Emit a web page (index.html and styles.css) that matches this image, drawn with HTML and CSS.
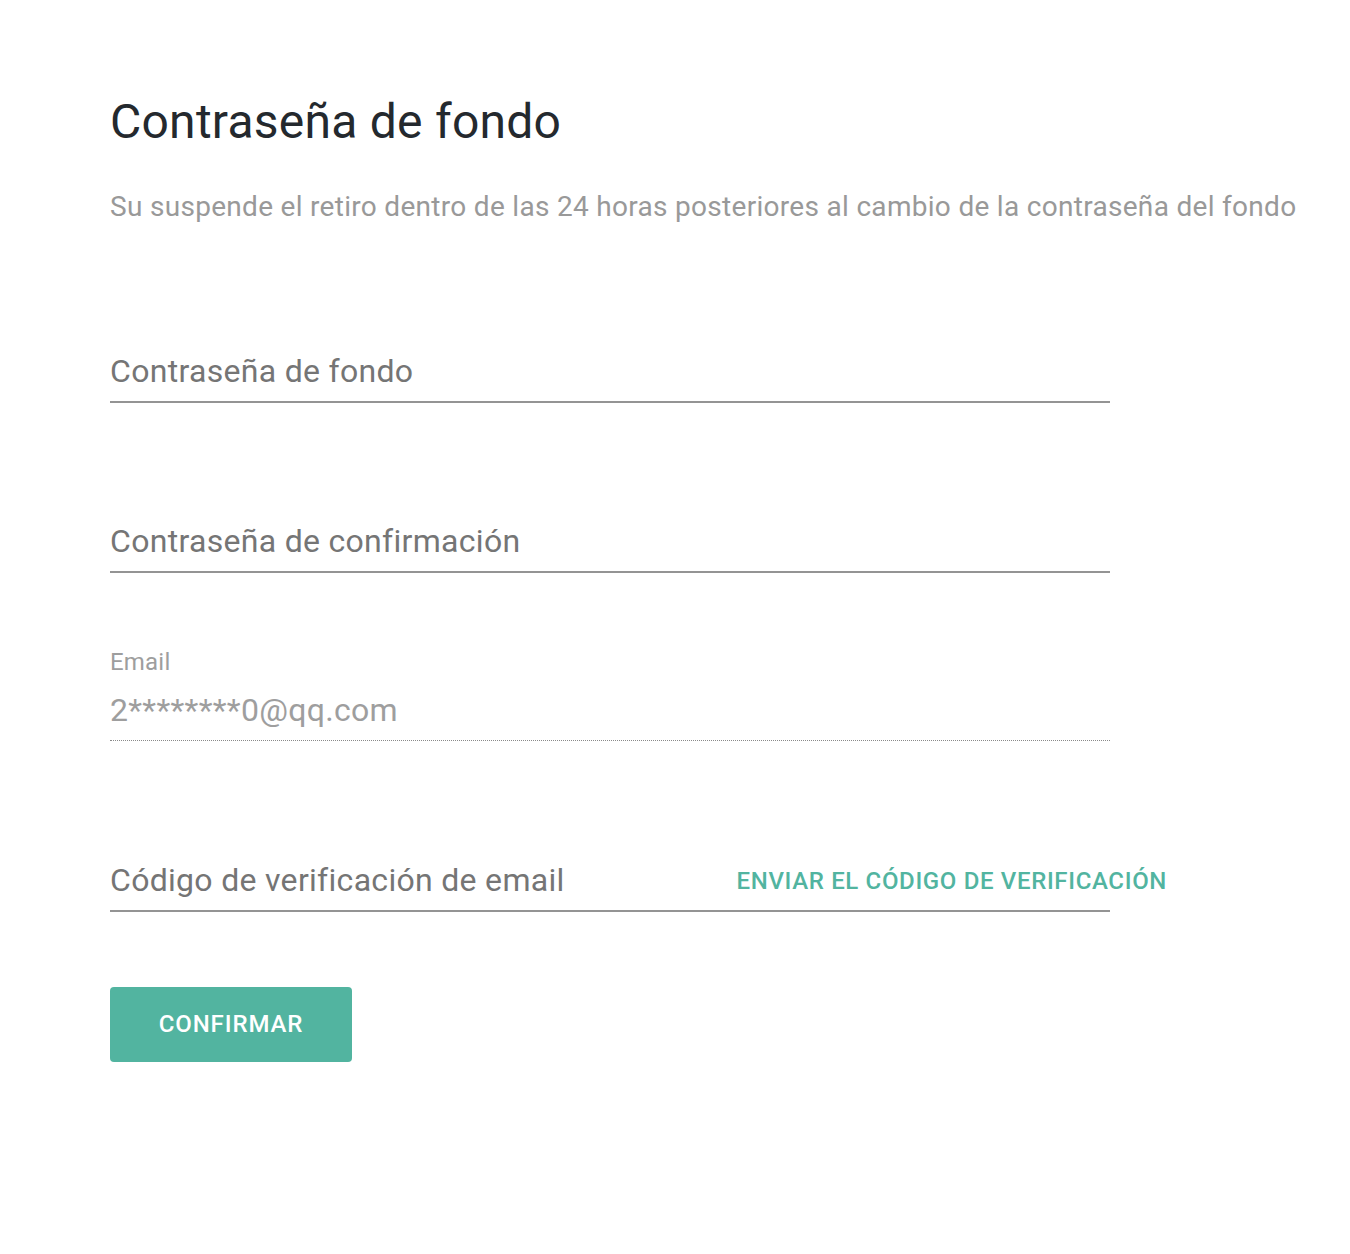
FILE: index.html
```html
<!DOCTYPE html>
<html lang="es">
<head>
<meta charset="utf-8">
<title>Contraseña de fondo</title>
<link rel="stylesheet" href="styles.css">
</head>
<body>
<main class="page">
  <h1 class="title">Contraseña de fondo</h1>
  <p class="subtitle">Su suspende el retiro dentro de las 24 horas posteriores al cambio de la contraseña del fondo</p>
  <form class="form">
    <div class="field field-first">
      <span class="placeholder">Contraseña de fondo</span>
    </div>
    <div class="field field-second">
      <span class="placeholder">Contraseña de confirmación</span>
    </div>
    <div class="field field-disabled">
      <span class="small-label">Email</span>
      <span class="value">2********0@qq.com</span>
    </div>
    <div class="field field-code">
      <span class="placeholder">Código de verificación de email</span>
      <a class="send-code" href="#">ENVIAR EL CÓDIGO DE VERIFICACIÓN</a>
    </div>
    <button type="button" class="confirm">CONFIRMAR</button>
  </form>
</main>
</body>
</html>
```
FILE: styles.css
```css
* { box-sizing: border-box; }
html, body { margin: 0; padding: 0; background: #fff; }
body { font-family: Roboto, "Noto Sans", Arial, sans-serif; }

.page {
  padding: 96px 0 0 110px;
}

.title {
  margin: 0;
  font-size: 48px;
  font-weight: 400;
  letter-spacing: 0.25px;
  line-height: 52px;
  color: #24292e;
}

.subtitle {
  margin: 44px 0 0;
  font-size: 28px;
  letter-spacing: 0.3px;
  line-height: 30px;
  color: #999;
}

.form {
  display: flex;
  flex-direction: column;
  align-items: flex-start;
  margin-top: 131px;
}

.field {
  position: relative;
  width: 1000px;
  display: flex;
  flex-direction: column;
  padding-bottom: 12px;
  border-bottom: 2px solid #949494;
}

.field-second { margin-top: 120px; }
.field-disabled {
  margin-top: 76px;
  border-bottom: 1px dotted #8a8a8a;
  padding-bottom: 12px;
}
.field-code { margin-top: 121px; }

.placeholder {
  font-size: 32px;
  letter-spacing: 0.3px;
  line-height: 36px;
  color: #757575;
}

.small-label {
  font-size: 24px;
  letter-spacing: 0.2px;
  line-height: 26px;
  color: #9e9e9e;
}

.value {
  margin-top: 17px;
  font-size: 32px;
  letter-spacing: 0.3px;
  line-height: 36px;
  color: #9e9e9e;
}

.send-code {
  position: absolute;
  right: -57px;
  top: 1px;
  line-height: 36px;
  font-size: 24px;
  font-weight: 500;
  letter-spacing: 0.65px;
  color: #52b4a0;
  text-decoration: none;
}

.confirm {
  margin-top: 75px;
  width: 242px;
  height: 75px;
  padding: 0 0 2px;
  border: 0;
  border-radius: 4px;
  background: #52b4a0;
  color: #fff;
  font-family: inherit;
  font-size: 24px;
  font-weight: 500;
  letter-spacing: 0.9px;
}
```
